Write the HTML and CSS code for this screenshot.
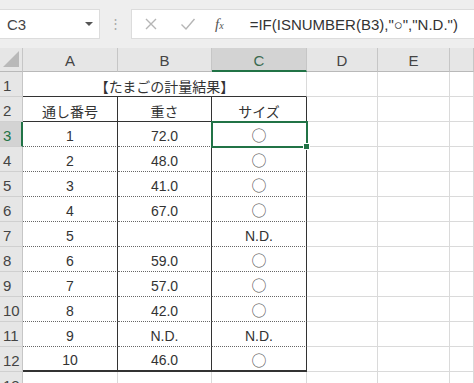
FILE: index.html
```html
<!DOCTYPE html>
<html lang="ja">
<head>
    <meta charset="UTF-8">
    <meta name="viewport" content="width=device-width, initial-scale=1.0">
    <title>たまごの計量結果</title>
<link rel="stylesheet" href="styles.css">
</head>
<body>
    <div class="bar">
        <div class="namebox">
            <span>C3</span>
            <span class="drop"></span>
        </div>
        <div class="grip">⋮</div>
        <div class="formula">
            <svg class="ico" width="14" height="14" viewBox="0 0 14 14"><path d="M2 2 L12 12 M12 2 L2 12" stroke="#b5b5b5" stroke-width="1.4" fill="none"/></svg>
            <svg class="ico" width="16" height="14" viewBox="0 0 16 14"><path d="M1.5 7.5 L6 12 L14.5 2" stroke="#b5b5b5" stroke-width="1.4" fill="none"/></svg>
            <span class="fx">f<sub>x</sub></span>
            <span class="ftext">=IF(ISNUMBER(B3),"○","N.D.")</span>
        </div>
    </div>

    <div class="sheet">
        <!-- column headers -->
        <div class="corner"><svg width="16" height="16" viewBox="0 0 16 16"><path d="M16 0 L16 16 L0 16 Z" fill="#b9b9b9"/></svg></div>
        <div class="ch">A</div>
        <div class="ch">B</div>
        <div class="ch sel">C</div>
        <div class="ch">D</div>
        <div class="ch">E</div>
        <div class="ch"></div>

        <div class="rh">1</div>
        <div class="c title">【たまごの計量結果】</div>
        <div class="c"></div><div class="c"></div><div class="c"></div>

        <div class="rh">2</div>
        <div class="c t head">通し番号</div>
        <div class="c t head">重さ</div>
        <div class="c t head">サイズ</div>
        <div class="c"></div><div class="c"></div><div class="c"></div>

        <div class="rh sel">3</div>
        <div class="c t dot">1</div>
        <div class="c t dot">72.0</div>
        <div class="c t dot mark active">○</div>
        <div class="c"></div><div class="c"></div><div class="c"></div>

        <div class="rh">4</div>
        <div class="c t dot">2</div>
        <div class="c t dot">48.0</div>
        <div class="c t dot mark">○</div>
        <div class="c"></div><div class="c"></div><div class="c"></div>

        <div class="rh">5</div>
        <div class="c t dot">3</div>
        <div class="c t dot">41.0</div>
        <div class="c t dot mark">○</div>
        <div class="c"></div><div class="c"></div><div class="c"></div>

        <div class="rh">6</div>
        <div class="c t dot">4</div>
        <div class="c t dot">67.0</div>
        <div class="c t dot mark">○</div>
        <div class="c"></div><div class="c"></div><div class="c"></div>

        <div class="rh">7</div>
        <div class="c t dot">5</div>
        <div class="c t dot"></div>
        <div class="c t dot">N.D.</div>
        <div class="c"></div><div class="c"></div><div class="c"></div>

        <div class="rh">8</div>
        <div class="c t dot">6</div>
        <div class="c t dot">59.0</div>
        <div class="c t dot mark">○</div>
        <div class="c"></div><div class="c"></div><div class="c"></div>

        <div class="rh">9</div>
        <div class="c t dot">7</div>
        <div class="c t dot">57.0</div>
        <div class="c t dot mark">○</div>
        <div class="c"></div><div class="c"></div><div class="c"></div>

        <div class="rh">10</div>
        <div class="c t dot">8</div>
        <div class="c t dot">42.0</div>
        <div class="c t dot mark">○</div>
        <div class="c"></div><div class="c"></div><div class="c"></div>

        <div class="rh">11</div>
        <div class="c t dot">9</div>
        <div class="c t dot">N.D.</div>
        <div class="c t dot">N.D.</div>
        <div class="c"></div><div class="c"></div><div class="c"></div>

        <div class="rh">12</div>
        <div class="c t last">10</div>
        <div class="c t last">46.0</div>
        <div class="c t last mark">○</div>
        <div class="c"></div><div class="c"></div><div class="c"></div>

        <div class="rh">13</div>
        <div class="c"></div><div class="c"></div><div class="c"></div>
        <div class="c"></div><div class="c"></div><div class="c"></div>
    </div>
</body>
</html>
```

FILE: styles.css
```css
*
{
    box-sizing: border-box;
}
body
{
    margin: 0;
    overflow: hidden;
    background: #fff;
    font-family: "Liberation Sans", "Noto Sans CJK JP", sans-serif;
    color: #333;
}

/* formula bar */
.bar
{
    display: flex;
    align-items: flex-start;
    height: 48px;
    padding-top: 9px;
    background: #eeeeee;
}
.namebox
{
    display: flex;
    align-items: center;
    justify-content: space-between;
    width: 100px;
    height: 30px;
    padding: 0 6px 0 7px;
    background: #fff;
    border: 1px solid #dcdcdc;
    border-left: 0;
    font-size: 15px;
    color: #444;
}
.drop
{
    width: 0;
    height: 0;
    border-left: 4px solid transparent;
    border-right: 4px solid transparent;
    border-top: 4px solid #555;
}
.grip
{
    width: 31px;
    height: 30px;
    line-height: 30px;
    text-align: center;
    color: #a8a8a8;
    font-size: 13px;
}
.formula
{
    flex: 1;
    display: flex;
    align-items: center;
    height: 30px;
    padding-left: 12px;
    background: #fff;
    border: 1px solid #dcdcdc;
    border-right: 0;
    white-space: nowrap;
    overflow: hidden;
}
.ico
{
    margin-right: 22px;
}
.fx
{
    font-family: "Liberation Serif", serif;
    font-style: italic;
    font-size: 15px;
    color: #555;
    margin-left: -3px;
}
.fx sub
{
    font-size: 10px;
    vertical-align: 0;
}
.ftext
{
    margin-left: 26px;
    font-size: 15px;
    color: #333;
}

/* sheet grid */
.sheet
{
    display: grid;
    grid-template-columns: 23px 95px 94px 95px 71px 72px 1fr;
    grid-template-rows: 24px;
    grid-auto-rows: 25px;
    font-size: 14px;
}
.corner, .ch, .rh
{
    background: #e6e6e6;
    border-right: 1px solid #c6c6c6;
    border-bottom: 1px solid #b9b9b9;
    color: #444;
}
.corner
{
    display: flex;
    align-items: flex-end;
    justify-content: flex-end;
    padding: 0 3px 4px 0;
}
.ch
{
    display: flex;
    align-items: center;
    justify-content: center;
    padding-top: 2px;
    font-size: 15px;
}
.ch.sel
{
    background: #d3d3d3;
    border-bottom: 2px solid #217346;
    color: #3a6a50;
}
.rh
{
    display: flex;
    align-items: center;
    padding: 2px 0 0 3px;
    font-size: 15px;
    border-bottom-color: #d0d0d0;
}
.rh.sel
{
    background: #d3d3d3;
    color: #217346;
    border-right: 2px solid #217346;
}
.c
{
    display: flex;
    align-items: center;
    justify-content: center;
    padding-top: 3px;
    border-right: 1px solid #dadada;
    border-bottom: 1px solid #dadada;
    white-space: nowrap;
}
.title
{
    grid-column: span 3;
    border-bottom-color: #333;
}
.t
{
    border-right-color: #333;
}
.head
{
    border-bottom-color: #333;
}
.dot
{
    border-bottom: 1px dotted #666;
}
.last
{
    border-bottom: 2px solid #333;
}
.mark
{
    font-family: "Noto Sans CJK JP", sans-serif;
    font-size: 15px;
    color: #555;
    padding-top: 1px;
}
.active
{
    position: relative;
    outline: 2px solid #217346;
    outline-offset: -1px;
    z-index: 1;
}
.active::after
{
    content: "";
    position: absolute;
    right: -4px;
    bottom: -4px;
    width: 5px;
    height: 5px;
    background: #217346;
    border: 1px solid #fff;
}
```
